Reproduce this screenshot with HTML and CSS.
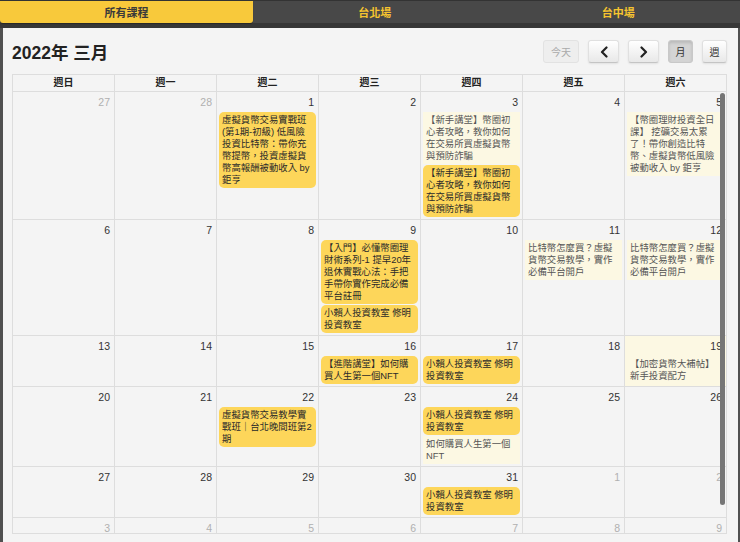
FILE: index.html
```html
<!DOCTYPE html>
<html lang="zh-Hant">
<head>
    <meta charset="UTF-8">
    <meta name="viewport" content="width=device-width, initial-scale=1.0">
    <title>課程行事曆</title>
    <link rel="stylesheet" href="styles.css">
</head>
<body>
    <nav class="tabs">
        <a class="tab active">所有課程</a>
        <a class="tab">台北場</a>
        <a class="tab">台中場</a>
    </nav>

    <div class="page">
        <div class="toolbar">
            <h2 class="title">2022年 三月</h2>
            <div class="buttons">
                <button class="btn btn-today" disabled>今天</button>
                <button class="btn btn-arrow">
                    <svg viewBox="0 0 8 12" width="8" height="12"><polyline points="6.5,1.5 2,6 6.5,10.5" /></svg>
                </button>
                <button class="btn btn-arrow">
                    <svg viewBox="0 0 8 12" width="8" height="12"><polyline points="1.5,1.5 6,6 1.5,10.5" /></svg>
                </button>
                <button class="btn btn-view active">月</button>
                <button class="btn btn-view">週</button>
            </div>
        </div>

        <div class="calendar">
            <div class="dow">
                <div>週日</div><div>週一</div><div>週二</div><div>週三</div><div>週四</div><div>週五</div><div>週六</div>
            </div>

            <div class="weeks">
                <div class="week">
                    <div class="day other"><div class="num">27</div></div>
                    <div class="day other"><div class="num">28</div></div>
                    <div class="day">
                        <div class="num">1</div>
                        <div class="event">虛擬貨幣交易實戰班<br>(第1期-初級) 低風險<br>投資比特幣：帶你充<br>幣提幣，投資虛擬貨<br>幣高報酬被動收入 by<br>鉅亨</div>
                    </div>
                    <div class="day"><div class="num">2</div></div>
                    <div class="day">
                        <div class="num">3</div>
                        <div class="event past">【新手講堂】幣圈初<br>心者攻略，教你如何<br>在交易所買虛擬貨幣<br>與預防詐騙</div>
                        <div class="event">【新手講堂】幣圈初<br>心者攻略，教你如何<br>在交易所買虛擬貨幣<br>與預防詐騙</div>
                    </div>
                    <div class="day"><div class="num">4</div></div>
                    <div class="day">
                        <div class="num">5</div>
                        <div class="event past">【幣圈理財投資全日<br>課】 挖礦交易太累<br>了！帶你創造比特<br>幣、虛擬貨幣低風險<br>被動收入 by 鉅亨</div>
                    </div>
                </div>

                <div class="week">
                    <div class="day"><div class="num">6</div></div>
                    <div class="day"><div class="num">7</div></div>
                    <div class="day"><div class="num">8</div></div>
                    <div class="day">
                        <div class="num">9</div>
                        <div class="event">【入門】必懂幣圈理<br>財術系列-1 提早20年<br>退休實戰心法：手把<br>手帶你實作完成必備<br>平台註冊</div>
                        <div class="event">小賴人投資教室 修明<br>投資教室</div>
                    </div>
                    <div class="day"><div class="num">10</div></div>
                    <div class="day">
                        <div class="num">11</div>
                        <div class="event past">比特幣怎麼買？虛擬<br>貨幣交易教學，實作<br>必備平台開戶</div>
                    </div>
                    <div class="day">
                        <div class="num">12</div>
                        <div class="event past">比特幣怎麼買？虛擬<br>貨幣交易教學，實作<br>必備平台開戶</div>
                    </div>
                </div>

                <div class="week">
                    <div class="day"><div class="num">13</div></div>
                    <div class="day"><div class="num">14</div></div>
                    <div class="day"><div class="num">15</div></div>
                    <div class="day">
                        <div class="num">16</div>
                        <div class="event">【進階講堂】如何購<br>買人生第一個NFT</div>
                    </div>
                    <div class="day">
                        <div class="num">17</div>
                        <div class="event">小賴人投資教室 修明<br>投資教室</div>
                    </div>
                    <div class="day"><div class="num">18</div></div>
                    <div class="day today">
                        <div class="num">19</div>
                        <div class="event past">【加密貨幣大補帖】<br>新手投資配方</div>
                    </div>
                </div>

                <div class="week">
                    <div class="day"><div class="num">20</div></div>
                    <div class="day"><div class="num">21</div></div>
                    <div class="day">
                        <div class="num">22</div>
                        <div class="event">虛擬貨幣交易教學實<br>戰班｜台北晚間班第2<br>期</div>
                    </div>
                    <div class="day"><div class="num">23</div></div>
                    <div class="day">
                        <div class="num">24</div>
                        <div class="event">小賴人投資教室 修明<br>投資教室</div>
                        <div class="event past">如何購買人生第一個<br>NFT</div>
                    </div>
                    <div class="day"><div class="num">25</div></div>
                    <div class="day"><div class="num">26</div></div>
                </div>

                <div class="week">
                    <div class="day"><div class="num">27</div></div>
                    <div class="day"><div class="num">28</div></div>
                    <div class="day"><div class="num">29</div></div>
                    <div class="day"><div class="num">30</div></div>
                    <div class="day">
                        <div class="num">31</div>
                        <div class="event">小賴人投資教室 修明<br>投資教室</div>
                    </div>
                    <div class="day other"><div class="num">1</div></div>
                    <div class="day other"><div class="num">2</div></div>
                </div>

                <div class="week">
                    <div class="day other"><div class="num">3</div></div>
                    <div class="day other"><div class="num">4</div></div>
                    <div class="day other"><div class="num">5</div></div>
                    <div class="day other"><div class="num">6</div></div>
                    <div class="day other"><div class="num">7</div></div>
                    <div class="day other"><div class="num">8</div></div>
                    <div class="day other"><div class="num">9</div></div>
                </div>

                <div class="scroll-thumb"></div>
            </div>
        </div>
    </div>
</body>
</html>
```

FILE: styles.css
```css
* {
    box-sizing: border-box;
}

body {
    margin: 0;
    background: #f4f4f4;
    font-family: "Liberation Sans", "Noto Sans CJK TC", sans-serif;
    color: #333;
}

/* top tabs */

.tabs {
    display: grid;
    grid-template-columns: 253px 1fr 1fr;
    height: 28px;
    background: #484848;
    border-top: 1px solid #333;
    border-bottom: 5px solid #373737;
}

.tab {
    display: flex;
    justify-content: center;
    align-items: center;
    font-size: 11px;
    font-weight: bold;
    color: #f6c42f;
    cursor: pointer;
}

.tab.active {
    background: #f8c93b;
    color: #3a3a3a;
    border-radius: 0 0 3px 3px;
    box-shadow: 0 1px 1px rgba(0, 0, 0, 0.3);
}

/* page frame */

.page {
    min-height: calc(100vh - 28px);
    border-left: 3px solid #505050;
    border-right: 2px solid #505050;
    padding: 12px 11px 0 9px;
}

.toolbar {
    display: flex;
    justify-content: space-between;
    align-items: center;
    height: 23px;
    margin-bottom: 11px;
}

.title {
    margin: 0;
    font-size: 17.5px;
    font-weight: bold;
    color: #222;
}

.buttons {
    display: flex;
    gap: 9px;
}

.btn {
    height: 23px;
    padding: 0;
    font-family: inherit;
    font-size: 10px;
    color: #333;
    background: linear-gradient(#fff, #e8e8e8);
    border: 1px solid #e0e0e0;
    border-bottom-color: #c4c4c4;
    border-radius: 3px;
    box-shadow: 0 1px 2px rgba(0, 0, 0, 0.08);
    display: flex;
    justify-content: center;
    align-items: center;
}

.btn-today {
    width: 36px;
    color: #aaa;
    background: #eee;
    border-color: #e2e2e2;
    box-shadow: none;
}

.btn-arrow {
    width: 31px;
}

.btn-arrow svg {
    fill: none;
    stroke: #222;
    stroke-width: 2.2px;
    stroke-linecap: round;
    stroke-linejoin: round;
}

.btn-view {
    width: 25px;
}

.btn-view.active {
    background: #d4d4d4;
    border-color: #c8c8c8;
    box-shadow: inset 0 2px 3px rgba(0, 0, 0, 0.12);
}

/* calendar grid */

.calendar {
    width: 715px;
}

.dow {
    display: grid;
    grid-template-columns: repeat(7, 1fr);
    border-top: 1px solid #ddd;
    border-left: 1px solid #ddd;
}

.dow div {
    height: 17px;
    line-height: 16px;
    text-align: center;
    font-size: 10px;
    font-weight: bold;
    color: #222;
    border-right: 1px solid #ddd;
    border-bottom: 1px solid #ddd;
}

.weeks {
    position: relative;
    height: 442px;
    overflow: hidden;
    border-left: 1px solid #ddd;
    border-bottom: 1px solid #ddd;
}

.week {
    display: grid;
    grid-template-columns: repeat(7, 1fr);
}

.day {
    min-height: 50px;
    min-width: 0;
    padding-bottom: 1px;
    border-right: 1px solid #ddd;
    border-bottom: 1px solid #ddd;
}

.day.today {
    background: #fcf8e3;
}

.num {
    height: 20px;
    padding: 3px 4px 0;
    line-height: 14px;
    text-align: right;
    font-size: 10.5px;
    color: #333;
}

.other .num {
    color: #b0b0b0;
}

.event {
    margin: 0 2px 1px;
    padding: 2px 3px;
    font-size: 9.4px;
    line-height: 12px;
    white-space: nowrap;
    overflow: hidden;
    color: #2a2a2a;
    background: #fdd65a;
    border-radius: 5px;
}

.event.past {
    color: #555;
    background: #fcf8e3;
    border-radius: 0;
}

.scroll-thumb {
    position: absolute;
    top: 1px;
    right: 2px;
    width: 5px;
    height: 412px;
    background: #767676;
    border-radius: 3px;
}
```
